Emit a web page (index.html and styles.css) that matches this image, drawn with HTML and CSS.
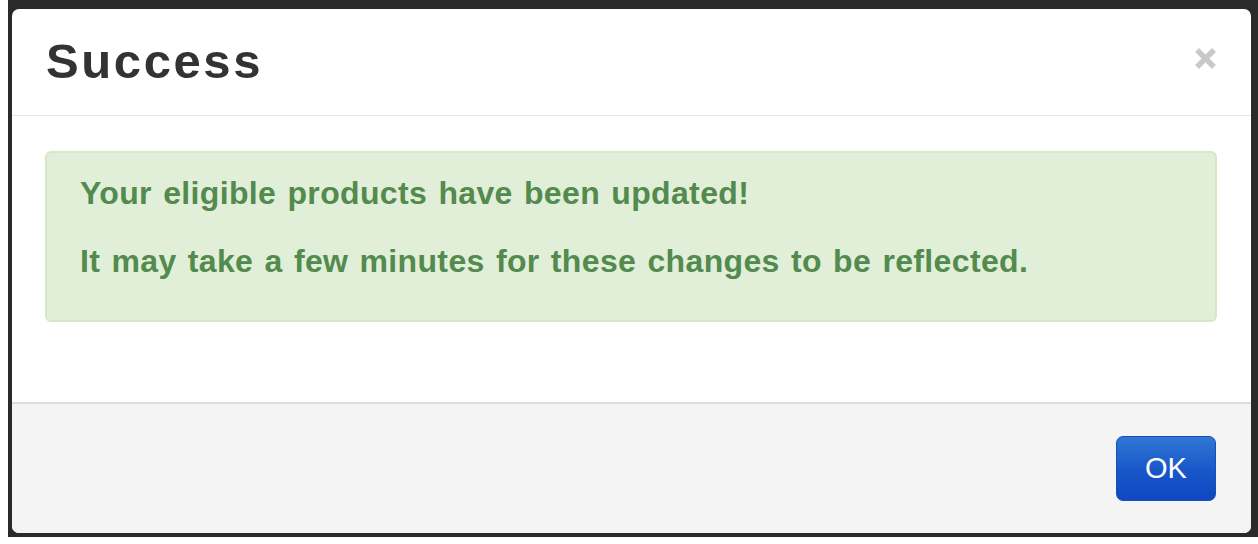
FILE: index.html
```html
<!DOCTYPE html>
<html>
<head>
<meta charset="utf-8">
<link rel="stylesheet" href="styles.css">
</head>
<body>
<div class="frame">
  <div class="dialog">
    <div class="dialog-header">
      <h1 class="dialog-title">Success</h1>
      <button class="close" aria-label="Close">
        <svg width="23" height="23" viewBox="0 0 23 23"><path d="M3 3 L20 20 M20 3 L3 20" stroke="#c9c9c9" stroke-width="5.5" stroke-linecap="butt"/></svg>
      </button>
    </div>
    <div class="dialog-body">
      <div class="alert">
        <p class="alert-line">Your eligible products have been updated!</p>
        <p class="alert-line">It may take a few minutes for these changes to be reflected.</p>
      </div>
    </div>
    <div class="dialog-footer">
      <button class="btn-ok">OK</button>
    </div>
  </div>
</div>
</body>
</html>
```

FILE: styles.css
```css
html, body {
  margin: 0;
  padding: 0;
  background: #ffffff;
}
body {
  font-family: "Liberation Sans", Arial, sans-serif;
}
.frame {
  margin-left: 8px;
  background: #2a2a2a;
  padding: 9px 7px 4px 4px;
  height: 524px;
}
.dialog {
  background: #ffffff;
  border-radius: 7px;
  height: 524px;
  display: flex;
  flex-direction: column;
  overflow: hidden;
}
.dialog-header {
  height: 107px;
  box-sizing: border-box;
  border-bottom: 1px solid #e6e6e6;
  display: flex;
  align-items: center;
  justify-content: space-between;
  padding: 0 34px 0 34px;
}
.dialog-title {
  margin: 0;
  font-size: 49px;
  font-weight: bold;
  color: #333333;
  letter-spacing: 2.6px;
  line-height: 1;
  padding-bottom: 2px;
}
.close {
  background: none;
  border: 0;
  padding: 0;
  margin: 0;
  width: 23px;
  height: 23px;
  display: flex;
  margin-bottom: 8px;
}
.dialog-body {
  flex: 1;
  padding: 35px 34px 0 33px;
  box-sizing: border-box;
}
.alert {
  background: #e1efd9;
  border: 2px solid #d6e8c8;
  border-radius: 6px;
  height: 171px;
  box-sizing: border-box;
  padding: 20px 33px 0 33px;
}
.alert-line {
  margin: 0 0 28px 0;
  font-size: 32px;
  font-weight: bold;
  color: #538a4e;
  line-height: 40px;
  letter-spacing: 0.35px;
  word-spacing: 2px;
}
.dialog-footer {
  height: 131px;
  box-sizing: border-box;
  border-top: 2px solid #dcdcdc;
  background: #f4f4f4;
  display: flex;
  align-items: center;
  justify-content: flex-end;
  padding: 0 35px 0 0;
}
.btn-ok {
  width: 100px;
  height: 65px;
  border-radius: 7px;
  border: 1px solid #1a4fb5;
  background: linear-gradient(to bottom, #3077d6 0%, #1856c8 55%, #0f48c2 100%);
  color: #ffffff;
  font-family: "Liberation Sans", Arial, sans-serif;
  font-size: 29px;
  padding: 0;
}
```
